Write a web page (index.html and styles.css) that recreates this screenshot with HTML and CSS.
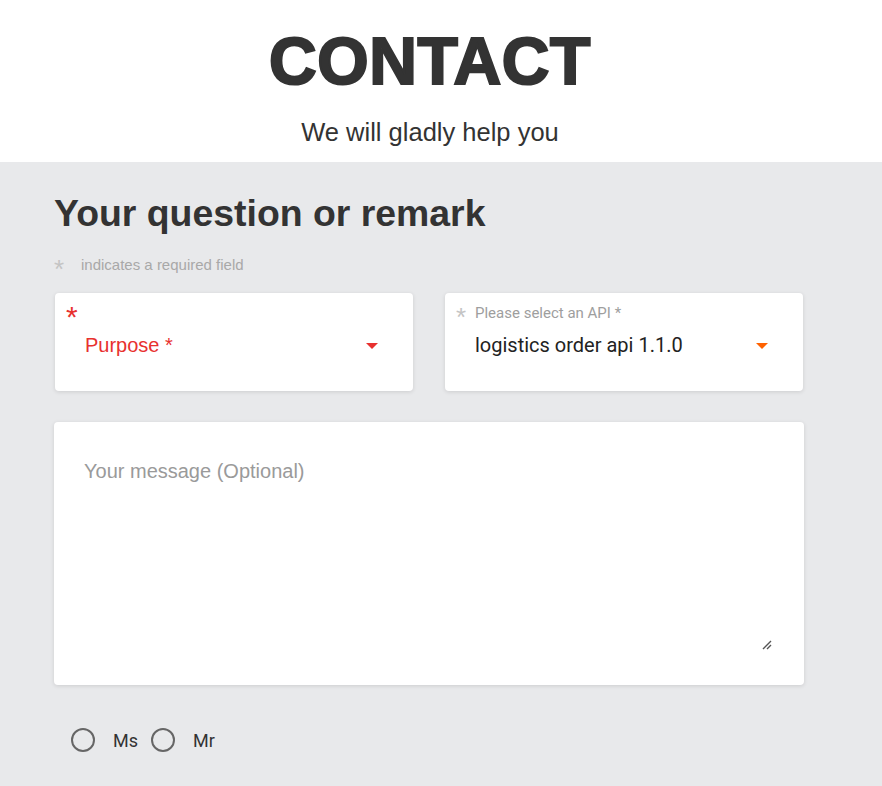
FILE: index.html
```html
<!DOCTYPE html>
<html>
<head>
<meta charset="utf-8">
<link rel="stylesheet" href="styles.css">
</head>
<body>
<header class="hero">
  <h1 class="hero-title">CONTACT</h1>
  <p class="hero-sub">We will gladly help you</p>
</header>
<main class="panel">
  <div class="container">
    <h2 class="section-title">Your question or remark</h2>
    <p class="required-note"><span class="note-star">*</span><span>indicates a required field</span></p>
    <div class="selects">
      <div class="card select-card">
        <div class="label-row">
          <span class="star star-red">*</span>
        </div>
        <div class="select-row">
          <span class="select-placeholder">Purpose *</span>
          <span class="caret caret-red"></span>
        </div>
      </div>
      <div class="card select-card">
        <div class="label-row">
          <span class="star star-gray">*</span>
          <span class="select-label">Please select an API *</span>
        </div>
        <div class="select-row">
          <span class="select-value">logistics order api 1.1.0</span>
          <span class="caret caret-orange"></span>
        </div>
      </div>
    </div>
    <div class="card message-card">
      <span class="message-placeholder">Your message (Optional)</span>
      <svg class="resize" width="10" height="10" viewBox="0 0 10 10"><path d="M1 9 L9 1 M5 9 L9 5" stroke="#555" stroke-width="1.4" fill="none"/></svg>
    </div>
    <div class="radios">
      <label class="radio"><span class="radio-circle"></span><span class="radio-text">Ms</span></label>
      <label class="radio"><span class="radio-circle"></span><span class="radio-text">Mr</span></label>
    </div>
  </div>
</main>
</body>
</html>
```
FILE: styles.css
```css
html, body {
  margin: 0;
  padding: 0;
}
body {
  font-family: "Liberation Sans", Arial, sans-serif;
  color: #333;
  background: #e8e9eb;
  width: 882px;
  height: 786px;
  overflow: hidden;
}
.hero {
  background: #fff;
  height: 162px;
  text-align: center;
  padding: 1px 22px 0 0;
  box-sizing: border-box;
}
.hero-title {
  margin: 22px 0 0 0;
  font-size: 66px;
  line-height: 76px;
  font-weight: 700;
  color: #333;
  -webkit-text-stroke: 2.2px #333;
  letter-spacing: 0.6px;
}
.hero-sub {
  margin: 19px 0 0 0;
  font-size: 25.5px;
  line-height: 28px;
  color: #333;
}
.panel {
  background: #e8e9eb;
}
.container {
  padding: 0 0 0 54px;
  width: 750px;
}
.section-title {
  margin: 0;
  padding-top: 30px;
  font-size: 37.4px;
  line-height: 42px;
  font-weight: 700;
  color: #333;
}
.required-note {
  margin: 21px 0 0 0;
  display: flex;
  align-items: center;
  font-size: 15px;
  color: #a8a8a8;
  height: 18px;
}
.note-star {
  font-size: 26px;
  width: 27px;
  line-height: 18px;
  padding-top: 9px;
  color: #c4c4c4;
}
.selects {
  display: flex;
  gap: 32px;
  margin-top: 20px;
  padding-left: 1px;
}
.card {
  background: #fff;
  border-radius: 4px;
  box-shadow: 0 1px 4px rgba(0,0,0,0.12);
}
.select-card {
  width: 358px;
  height: 98px;
  box-sizing: border-box;
  padding: 8px 35px 0 11px;
  font-family: Roboto, "Liberation Sans", sans-serif;
}
.label-row {
  display: flex;
  align-items: center;
  height: 24px;
}
.star {
  display: inline-block;
  font-family: "Liberation Sans", sans-serif;
}
.star-red {
  color: #e8312f;
  font-size: 30px;
  line-height: 20px;
  padding-top: 8px;
}
.star-gray {
  color: #c4c4c4;
  font-size: 26px;
  line-height: 18px;
  width: 19px;
  padding-top: 8px;
}
.select-label {
  font-size: 15px;
  color: #9e9e9e;
}
.select-row {
  display: flex;
  align-items: center;
  justify-content: space-between;
  padding-left: 19px;
  margin-top: 6px;
  height: 28px;
}
.select-placeholder {
  font-family: "Liberation Sans", sans-serif;
  font-size: 20px;
  color: #e8312f;
}
.select-value {
  font-size: 20px;
  color: #222;
}
.caret {
  width: 0;
  height: 0;
  border-left: 6px solid transparent;
  border-right: 6px solid transparent;
  margin-top: 2px;
}
.caret-red {
  border-top: 6px solid #e8312f;
}
.caret-orange {
  border-top: 6px solid #ff6200;
}
.message-card {
  margin-top: 31px;
  width: 750px;
  height: 263px;
  box-sizing: border-box;
  padding: 38px 30px;
  position: relative;
}
.message-placeholder {
  font-size: 20px;
  color: #9a9a9a;
}
.resize {
  position: absolute;
  right: 32px;
  bottom: 35px;
}
.radios {
  display: flex;
  align-items: center;
  gap: 13px;
  margin-top: 43px;
  padding-left: 17px;
}
.radio {
  display: flex;
  align-items: center;
  font-family: Roboto, "Liberation Sans", sans-serif;
  font-size: 18px;
  color: #333;
}
.radio-circle {
  width: 20px;
  height: 20px;
  border: 2px solid #666;
  border-radius: 50%;
  margin-right: 18px;
}
```
